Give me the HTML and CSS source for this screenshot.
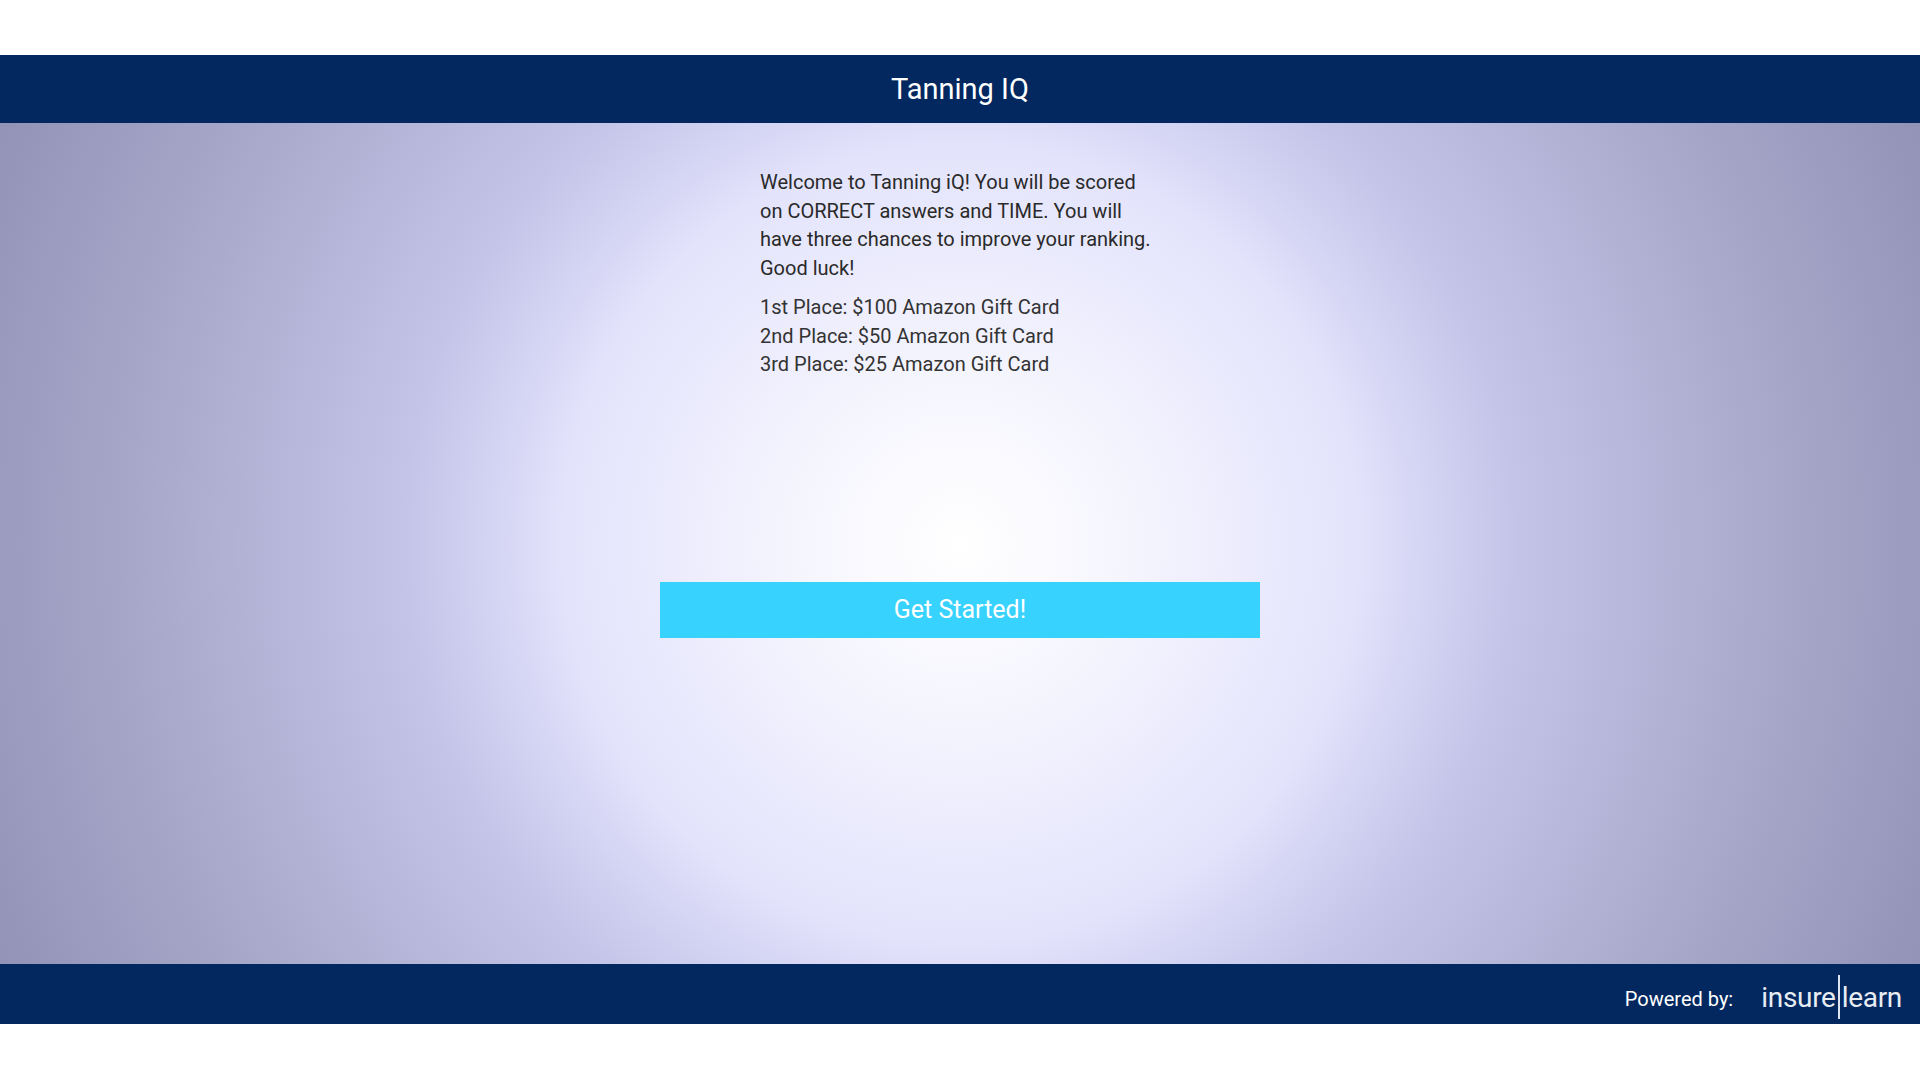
FILE: index.html
```html
<!DOCTYPE html>
<html lang="en">
<head>
  <meta charset="UTF-8" />
  <title>Tanning IQ</title>
  <link rel="stylesheet" href="styles.css">
</head>
<body>
  <div class="app">
    <div class="header">Tanning IQ</div>
    <div class="main">
      <div class="intro">
        <p class="welcome">Welcome to Tanning iQ! You will be scored on CORRECT answers and TIME. You will have three chances to improve your ranking. Good luck!</p>
        <p class="prizes">1st Place: $100 Amazon Gift Card<br>2nd Place: $50 Amazon Gift Card<br>3rd Place: $25 Amazon Gift Card</p>
      </div>
      <button class="start">Get Started!</button>
    </div>
    <div class="footer">
      <span class="powered">Powered by:</span>
      <div class="logo"><span>insure</span><i class="bar"></i><span>learn</span></div>
    </div>
  </div>
</body>
</html>
```
FILE: styles.css
```css
body {
  margin: 0;
  background: #fff;
  font-family: Roboto, sans-serif;
}
.app {
  margin-top: 55px;
  height: 969px;
  display: flex;
  flex-direction: column;
}
.header {
  height: 68px;
  background: #02285f;
  color: #fff;
  font-size: 29px;
  line-height: 68px;
  text-align: center;
}
.main {
  flex: 1;
  display: flex;
  flex-direction: column;
  align-items: center;
  background: radial-gradient(circle at 50% 50%, #fff 0%, #f5f5fe 16%, #ebebfd 28%, #e3e3fc 38%, #d3d3f3 45%, #c4c4e8 53%, #b3b3d6 68%, #a6a6c8 80%, #9b9bbf 91.6%, #9393b8 100%);
}
.intro {
  width: 400px;
  margin-top: 45px;
  font-size: 20px;
}
.intro p {
  margin: 0 0 11px;
}
.welcome {
  color: #2a2a2a;
  line-height: 28.6px;
}
.prizes {
  color: #333;
  line-height: 28.2px;
}
.start {
  width: 600px;
  height: 56px;
  margin-top: 193px;
  border: none;
  background: #38d2ff;
  color: #fff;
  font-family: Roboto, sans-serif;
  font-size: 25px;
}
.footer {
  height: 60px;
  background: #02285f;
  color: #fff;
  display: flex;
  align-items: center;
  justify-content: flex-end;
  padding-right: 18px;
}
.powered {
  font-size: 20px;
  margin-right: 28px;
  margin-top: 10px;
}
.logo {
  display: flex;
  align-items: center;
  color: #e8ecf3;
  font-size: 28px;
  margin-top: 6px;
  letter-spacing: -0.3px;
}
.logo .bar {
  display: block;
  width: 2px;
  height: 44px;
  margin: 0 2px;
  background: #dfe4ee;
}
```
